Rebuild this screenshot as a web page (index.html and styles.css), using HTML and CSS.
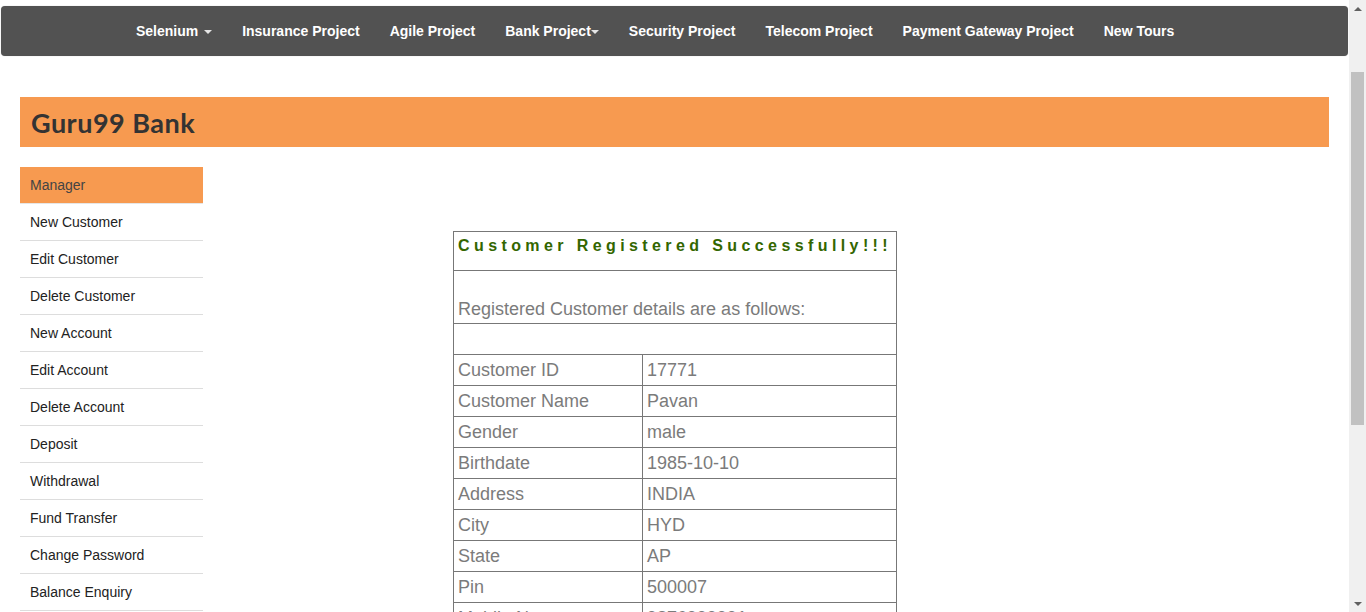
FILE: index.html
```html
<!DOCTYPE html>
<html>
<head>
<meta charset="utf-8">
<title>Guru99 Bank</title>
<link rel="stylesheet" href="styles.css">
</head>
<body>
<div class="page">
  <div class="main">
    <nav class="topnav">
      <ul class="navlist">
        <li><a href="#">Selenium <span class="caret"></span></a></li>
        <li><a href="#">Insurance Project</a></li>
        <li><a href="#">Agile Project</a></li>
        <li><a href="#">Bank Project<span class="caret tight"></span></a></li>
        <li><a href="#">Security Project</a></li>
        <li><a href="#">Telecom Project</a></li>
        <li><a href="#">Payment Gateway Project</a></li>
        <li><a href="#">New Tours</a></li>
      </ul>
    </nav>
    <div class="container">
      <header class="banner"><h1 class="brand">Guru99 Bank</h1></header>
      <div class="body-row">
        <ul class="sidebar">
          <li class="active">Manager</li>
          <li>New Customer</li>
          <li>Edit Customer</li>
          <li>Delete Customer</li>
          <li>New Account</li>
          <li>Edit Account</li>
          <li>Delete Account</li>
          <li>Deposit</li>
          <li>Withdrawal</li>
          <li>Fund Transfer</li>
          <li>Change Password</li>
          <li>Balance Enquiry</li>
          <li>Mini Statement</li>
        </ul>
        <div class="content">
          <table class="details">
            <tr class="r-head"><td colspan="2"><p class="heading3">Customer Registered Successfully!!!</p></td></tr>
            <tr class="r-sub"><td colspan="2">Registered Customer details are as follows:</td></tr>
            <tr class="r-empty"><td colspan="2"></td></tr>
            <tr><td class="lbl">Customer ID</td><td>17771</td></tr>
            <tr><td class="lbl">Customer Name</td><td>Pavan</td></tr>
            <tr><td class="lbl">Gender</td><td>male</td></tr>
            <tr><td class="lbl">Birthdate</td><td>1985-10-10</td></tr>
            <tr><td class="lbl">Address</td><td>INDIA</td></tr>
            <tr><td class="lbl">City</td><td>HYD</td></tr>
            <tr><td class="lbl">State</td><td>AP</td></tr>
            <tr><td class="lbl">Pin</td><td>500007</td></tr>
            <tr><td class="lbl">Mobile No.</td><td>9876999991</td></tr>
            <tr><td class="lbl">Email</td><td>pavan@gmail.com</td></tr>
          </table>
        </div>
      </div>
    </div>
  </div>
  <div class="scrollbar">
    <div class="sb-arrow up"></div>
    <div class="sb-track"><div class="sb-thumb"></div></div>
    <div class="sb-arrow down"></div>
  </div>
</div>
</body>
</html>
```
FILE: styles.css
```css
html, body {
  margin: 0;
  padding: 0;
  height: 612px;
  overflow: hidden;
  background: #fff;
}
body {
  font-family: "Liberation Sans", Arial, sans-serif;
}
.page {
  display: flex;
  height: 612px;
}
.main {
  flex: 1;
  min-width: 0;
  overflow: hidden;
}
.topnav {
  margin: 6px 1px 0 1px;
  height: 50px;
  background: #525252;
  border-radius: 4px;
  box-shadow: 0 0 1px rgba(0,0,0,0.3);
}
.navlist {
  list-style: none;
  margin: 0;
  padding: 0 0 0 120px;
  display: flex;
  height: 50px;
  align-items: center;
}
.navlist a {
  display: block;
  padding: 0 15px;
  color: #fff;
  font-weight: bold;
  font-size: 14px;
  text-decoration: none;
  line-height: 50px;
}
.caret {
  display: inline-block;
  width: 0;
  height: 0;
  margin-left: 2px;
  vertical-align: middle;
  border-top: 4px solid #fff;
  border-left: 4px solid transparent;
  border-right: 4px solid transparent;
  opacity: 0.85;
}
.caret.tight { margin-left: 0; }
.container {
  padding: 41px 20px 0 20px;
}
.banner {
  height: 50px;
  background: #f79a50;
  display: flex;
  align-items: center;
  padding-left: 11px;
}
.brand {
  margin: 0;
  font-family: "Lato", "Noto Sans", sans-serif;
  font-weight: bold;
  font-size: 27px;
  color: #333;
  letter-spacing: 0.5px;
}
.body-row {
  display: flex;
  margin-top: 20px;
}
.sidebar {
  list-style: none;
  margin: 0;
  padding: 0;
  width: 183px;
  flex: none;
}
.sidebar li {
  height: 36px;
  line-height: 36px;
  padding-left: 10px;
  font-size: 14px;
  color: #222;
  border-bottom: 1px solid #dddddd;
}
.sidebar li.active {
  background: #f79a50;
  color: #444;
  border-bottom-color: #e6e6e6;
}
.content {
  flex: 1;
  padding: 64px 0 0 250px;
}
.details {
  width: 444px;
  border-collapse: collapse;
  border: 1px solid #333;
  font-size: 18px;
  color: #7b7b7b;
}
.details td {
  border: 1px solid #777;
  padding: 0 0 0 4px;
  height: 30px;
  line-height: 20px;
  vertical-align: middle;
}
.details td.lbl { width: 184px; }
.r-head td {
  height: 38px;
  vertical-align: top;
}
.heading3 {
  margin: 4px 0 0 0;
  font-size: 16px;
  font-weight: bold;
  color: #336600;
  letter-spacing: 4.4px;
}
.r-sub td {
  height: 48px;
  vertical-align: bottom;
  padding-bottom: 4px;
}
.scrollbar {
  width: 17px;
  flex: none;
  background: #f0f0f0;
  display: flex;
  flex-direction: column;
}
.sb-arrow {
  height: 17px;
  display: flex;
  align-items: center;
  justify-content: center;
}
.sb-arrow.up::before {
  content: "";
  border-bottom: 4px solid #606060;
  border-left: 4px solid transparent;
  border-right: 4px solid transparent;
}
.sb-arrow.down::before {
  content: "";
  border-top: 4px solid #606060;
  border-left: 4px solid transparent;
  border-right: 4px solid transparent;
}
.sb-track {
  flex: 1;
  padding: 55px 2px 0 2px;
}
.sb-thumb {
  height: 353px;
  background: #c1c1c1;
}
```
